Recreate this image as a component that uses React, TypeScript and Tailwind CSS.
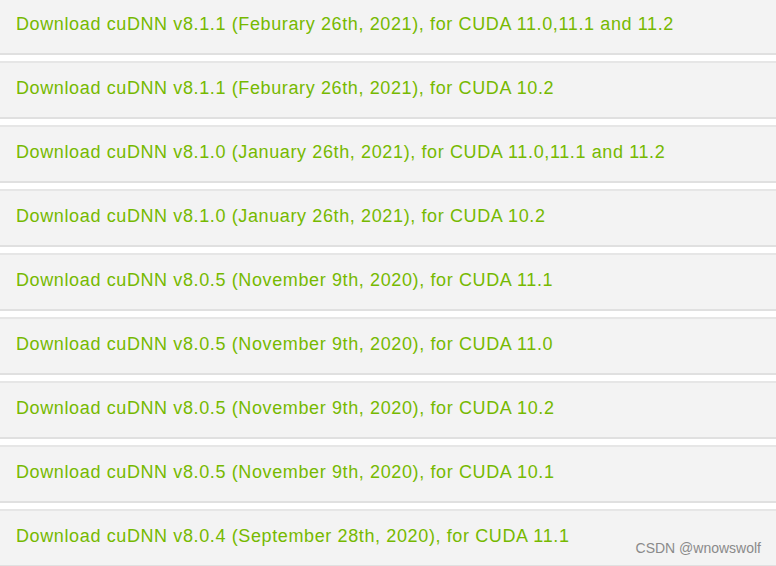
import React from "react";

const items = [
  "Download cuDNN v8.1.1 (Feburary 26th, 2021), for CUDA 11.0,11.1 and 11.2",
  "Download cuDNN v8.1.1 (Feburary 26th, 2021), for CUDA 10.2",
  "Download cuDNN v8.1.0 (January 26th, 2021), for CUDA 11.0,11.1 and 11.2",
  "Download cuDNN v8.1.0 (January 26th, 2021), for CUDA 10.2",
  "Download cuDNN v8.0.5 (November 9th, 2020), for CUDA 11.1",
  "Download cuDNN v8.0.5 (November 9th, 2020), for CUDA 11.0",
  "Download cuDNN v8.0.5 (November 9th, 2020), for CUDA 10.2",
  "Download cuDNN v8.0.5 (November 9th, 2020), for CUDA 10.1",
  "Download cuDNN v8.0.4 (September 28th, 2020), for CUDA 11.1",
];

export default function App() {
  return (
    <div className="relative w-[776px] h-[566px] overflow-hidden bg-white">
      <div className="-mt-[3px] flex flex-col gap-[6px]">
        {items.map((t, i) => (
          <div
            key={i}
            className="h-[58px] bg-[#f3f3f3] border-t-2 border-b-2 border-t-[#e6e6e6] border-b-[#e0e0e0] flex items-center pl-[16px] pb-[4px]"
          >
            <span
              className="text-[18px] text-[#76b900] tracking-[0.62px]"
              style={{ fontFamily: '"Liberation Sans", Arial, sans-serif' }}
            >
              {t}
            </span>
          </div>
        ))}
      </div>
      <div
        className="absolute right-[15px] bottom-[7px] text-[14px] text-[#8a8a8a]"
        style={{ fontFamily: '"Liberation Sans", Arial, sans-serif' }}
      >
        CSDN @wnowswolf
      </div>
    </div>
  );
}
